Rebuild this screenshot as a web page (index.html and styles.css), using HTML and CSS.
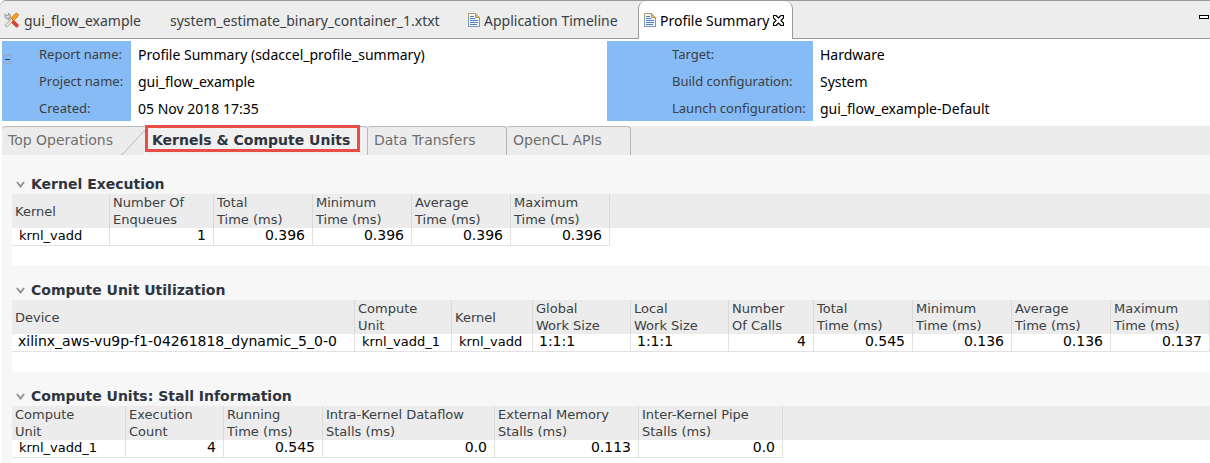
FILE: index.html
```html
<!DOCTYPE html>
<html lang="en">
<head>
<meta charset="utf-8">
<title>Profile Summary</title>
<link rel="stylesheet" href="styles.css">
</head>
<body>
<div class="app">
  <nav class="editor-tabs">
    <button class="editor-tab tab-project" type="button">
      <svg class="tools-icon" width="16" height="16" viewBox="0 0 16 16" aria-hidden="true">
        <path d="M4 5L12.500 13.500" stroke="#8a8a86" stroke-width="3.600" stroke-linecap="round"/>
        <path d="M4 5L12.500 13.500" stroke="#dcdcd8" stroke-width="1.800" stroke-linecap="round"/>
        <path d="M1 2v3.500l2 1.500 3-1L6.500 3 4.500 1v2.500H3z" fill="#d6d6d2" stroke="#888" stroke-width=".8"/>
        <path d="M2.500 13.500L8.500 7.500" stroke="#a8a8a4" stroke-width="3.400" stroke-linecap="round"/>
        <path d="M2.500 13.500L8.500 7.500" stroke="#e4e4e0" stroke-width="1.800" stroke-linecap="round"/>
        <path d="M7 6L12 1l2.500 1.500-1.500 3-3.500 3z" fill="#f5a31f" stroke="#ca6912" stroke-width=".8"/>
        <path d="M9.500 10l3.500 3.500" stroke="#df3f28" stroke-width="3.200" stroke-linecap="round"/>
      </svg>
      <span>gui_flow_example</span>
    </button>
    <button class="editor-tab tab-estimate" type="button">system_estimate_binary_container_1.xtxt</button>
    <button class="editor-tab tab-timeline" type="button">
      <svg width="12" height="14" viewBox="0 0 12 14" aria-hidden="true">
        <path d="M.5.5h7l4 4v9H.5z" fill="#edf4fc" stroke="#8095b6"/>
        <path d="M.5 5V.5h7l4 4" fill="none" stroke="#b3a06b"/>
        <path d="M7.500.5v4h4z" fill="#dfc071" stroke="#b99b51"/>
        <path d="M2 3.500h4M2 5.500h5M2 7.500h8M2 9.500h8M2 11.500h7" stroke="#557fbd"/>
      </svg>
      <span>Application Timeline</span>
    </button>
    <button class="editor-tab tab-current" type="button">
      <svg width="12" height="14" viewBox="0 0 12 14" aria-hidden="true">
        <path d="M.5.5h7l4 4v9H.5z" fill="#edf4fc" stroke="#8095b6"/>
        <path d="M.5 5V.5h7l4 4" fill="none" stroke="#b3a06b"/>
        <path d="M7.500.5v4h4z" fill="#dfc071" stroke="#b99b51"/>
        <path d="M2 3.500h4M2 5.500h5M2 7.500h8M2 9.500h8M2 11.500h7" stroke="#557fbd"/>
      </svg>
      <span>Profile Summary</span>
      <svg width="11" height="11" viewBox="0 0 11 11" aria-hidden="true">
        <path d="M.5.5h2.500l2.500 2.500L8 .5h2.500V3L8 5.500 10.500 8v2.500H8L5.500 8 3 10.500H.5V8L3 5.500.5 3z" fill="#fff" stroke="#000" stroke-width="1.200"/>
      </svg>
    </button>
    <button class="minimize" type="button" aria-label="Minimize"></button>
  </nav>

  <header class="report">
    <div class="labels labels-left">
      <button class="collapse" type="button" aria-label="Collapse"></button>
      <div class="label-list"><span>Report name:</span><span>Project name:</span><span>Created:</span></div>
    </div>
    <div class="values"><span>Profile Summary (sdaccel_profile_summary)</span><span>gui_flow_example</span><span>05 Nov 2018 17:35</span></div>
    <div class="labels labels-right">
      <div class="label-list"><span>Target:</span><span>Build configuration:</span><span>Launch configuration:</span></div>
    </div>
    <div class="values"><span>Hardware</span><span>System</span><span>gui_flow_example-Default</span></div>
  </header>

  <nav class="view-tabs">
    <button class="view-tab view-top" type="button">Top Operations
      <svg class="slope" width="24" height="29" viewBox="0 0 24 29" aria-hidden="true"><path d="M0 28.500Q2 28.500 4 26L22 6Q23 5 24 5" fill="none" stroke="#b8b8b8"/></svg>
    </button>
    <button class="view-tab view-kernels" type="button">Kernels &amp; Compute Units</button>
    <button class="view-tab view-transfers" type="button">Data Transfers</button>
    <button class="view-tab view-apis" type="button">OpenCL APIs</button>
  </nav>

  <main class="sections">
    <section>
      <h2><svg width="9" height="7" viewBox="0 0 9 7" aria-hidden="true"><path d="M1 1l3.500 4.500L8 1" fill="none" stroke="#929292" stroke-width="2"/></svg>Kernel Execution</h2>
      <div class="sheet">
        <table>
          <colgroup><col class="w98"><col class="w104"><col class="w99"><col class="w99"><col class="w99"><col class="w99"><col></colgroup>
          <thead><tr><th>Kernel</th><th>Number Of<br>Enqueues</th><th>Total<br>Time (ms)</th><th>Minimum<br>Time (ms)</th><th>Average<br>Time (ms)</th><th>Maximum<br>Time (ms)</th><td class="rest"></td></tr></thead>
          <tbody><tr><td>krnl_vadd</td><td class="num">1</td><td class="num">0.396</td><td class="num">0.396</td><td class="num">0.396</td><td class="num">0.396</td><td class="rest"></td></tr></tbody>
        </table>
      </div>
    </section>
    <section>
      <h2><svg width="9" height="7" viewBox="0 0 9 7" aria-hidden="true"><path d="M1 1l3.500 4.500L8 1" fill="none" stroke="#929292" stroke-width="2"/></svg>Compute Unit Utilization</h2>
      <div class="sheet">
        <table>
          <colgroup><col><col class="w97"><col class="w81"><col class="w98"><col class="w98"><col class="w85"><col class="w99"><col class="w99"><col class="w99"><col class="w99"></colgroup>
          <thead><tr><th>Device</th><th>Compute<br>Unit</th><th>Kernel</th><th>Global<br>Work Size</th><th>Local<br>Work Size</th><th>Number<br>Of Calls</th><th>Total<br>Time (ms)</th><th>Minimum<br>Time (ms)</th><th>Average<br>Time (ms)</th><th>Maximum<br>Time (ms)</th></tr></thead>
          <tbody><tr><td class="wide">xilinx_aws-vu9p-f1-04261818_dynamic_5_0-0</td><td>krnl_vadd_1</td><td>krnl_vadd</td><td class="wide">1:1:1</td><td class="wide">1:1:1</td><td class="num">4</td><td class="num">0.545</td><td class="num">0.136</td><td class="num">0.136</td><td class="num">0.137</td></tr></tbody>
        </table>
      </div>
    </section>
    <section>
      <h2><svg width="9" height="7" viewBox="0 0 9 7" aria-hidden="true"><path d="M1 1l3.500 4.500L8 1" fill="none" stroke="#929292" stroke-width="2"/></svg>Compute Units: Stall Information</h2>
      <div class="sheet">
        <table>
          <colgroup><col class="w114"><col class="w98"><col class="w99"><col class="w172"><col class="w144"><col class="w144"><col></colgroup>
          <thead><tr><th>Compute<br>Unit</th><th>Execution<br>Count</th><th>Running<br>Time (ms)</th><th>Intra-Kernel Dataflow<br>Stalls (ms)</th><th>External Memory<br>Stalls (ms)</th><th>Inter-Kernel Pipe<br>Stalls (ms)</th><td class="rest"></td></tr></thead>
          <tbody><tr><td>krnl_vadd_1</td><td class="num">4</td><td class="num">0.545</td><td class="num">0.0</td><td class="num">0.113</td><td class="num">0.0</td><td class="rest"></td></tr></tbody>
        </table>
      </div>
    </section>
  </main>
</div>
</body>
</html>
```
FILE: styles.css
```css
* { box-sizing: border-box; }

body {
  margin: 0;
  background: #fff;
  overflow: hidden;
}

button {
  margin: 0;
  padding: 0;
  border: 0;
  background: none;
  color: inherit;
  font: inherit;
  white-space: nowrap;
}

svg { flex: none; display: block; }

.app {
  font: 13px "DejaVu Sans", sans-serif;
  color: #3a4043;
}

/* Editor tabs */
.editor-tabs {
  display: flex;
  height: 39px;
  background: #ededed;
  border-top: 1px solid #999;
  border-radius: 6px 0 0 0;
  box-shadow: inset 0 -1px #999;
  font: 14px "Noto Sans", sans-serif;
}

.editor-tab {
  display: flex;
  align-items: center;
  gap: 4px;
}

.tab-project { width: 170px; padding-left: 4px; }
.tab-estimate { width: 298px; }
.tab-timeline { width: 170px; }

.tab-current {
  width: 155px;
  padding-left: 5px;
  background: #fff;
  color: #000;
  border: 1px solid #999;
  border-width: 0 1px;
  border-radius: 8px 8px 0 0;
}

.minimize {
  width: 10px;
  height: 4px;
  margin: 14px 1px 0 auto;
  background: #fff;
  border: 1px solid #000;
}

/* Report details */
.report {
  display: grid;
  grid-template-columns: 129px 476px 206px 1fr;
  padding: 2px 0 5px 2px;
  font: 14px/27px "Noto Sans", sans-serif;
  white-space: nowrap;
}

.labels {
  display: flex;
  height: 80px;
  background: #86bbf5;
  font-size: 13px;
}

.label-list, .values { display: flex; flex-direction: column; }
.values { height: 80px; padding-left: 7px; color: #000; }
.labels-right { padding-left: 65px; }

.collapse {
  display: flex;
  align-items: center;
  justify-content: center;
  width: 9px;
  height: 9px;
  margin: 14px 27px 0 1px;
  border: 1px solid #a2a9b3;
}

.collapse::before {
  content: "";
  width: 5px;
  height: 1px;
  background: #24405f;
}

/* View tabs */
.view-tabs {
  display: flex;
  height: 29px;
  margin-left: 2px;
  background: #ececec;
  font-size: 14px;
  color: #6f6f6f;
}

.view-tab {
  position: relative;
  padding: 0 0 3px 6px;
  text-align: left;
  border: 1px solid #b8b8b8;
  border-width: 1px 1px 0 0;
  border-radius: 4px 4px 0 0;
}

.view-top { width: 143px; border-right: 0; border-radius: 4px 0 0 0; }
.view-transfers { width: 139px; }
.view-apis { width: 124px; }

.slope {
  position: absolute;
  right: 0;
  bottom: 0;
}

.view-kernels {
  width: 223px;
  background: #f0f0f0;
  border-left: 1px solid #fff;
  color: #2e3440;
  font-weight: bold;
}

.view-kernels::after {
  content: "";
  position: absolute;
  inset: -2px 7px 3px -1px;
  border: 3px solid #ea4c46;
}

/* Table sections */
.sections {
  margin-left: 2px;
  padding: 19px 0 0 10px;
  background: #f7f7f7;
}

h2 {
  display: flex;
  align-items: center;
  gap: 6px;
  height: 20px;
  margin: 0;
  padding-left: 4px;
  color: #2e3440;
  font-size: 14px;
  white-space: nowrap;
}

.sheet { padding-bottom: 20px; background: #fff; }
section + section { padding-top: 14px; }

table {
  width: 100%;
  table-layout: fixed;
  border-collapse: separate;
  border-spacing: 0;
}

th {
  height: 34px;
  padding: 0 0 0 3px;
  background: #ececec;
  border-right: 1px solid #dadada;
  font-weight: normal;
  line-height: 17px;
  text-align: left;
  vertical-align: middle;
  white-space: nowrap;
}

td {
  height: 18px;
  padding: 0 0 2px 7px;
  border: 1px solid #e2e2e2;
  border-width: 0 1px 1px 0;
  color: #000;
  line-height: 15px;
  white-space: nowrap;
}

.num { padding: 0 7px 2px 0; font-size: 14px; text-align: right; }
.wide { font-size: 14px; padding-left: 6px; }
.rest { border: 0; }
thead .rest { background: #ececec; }

.w81 { width: 81px; }
.w85 { width: 85px; }
.w97 { width: 97px; }
.w98 { width: 98px; }
.w99 { width: 99px; }
.w104 { width: 104px; }
.w114 { width: 114px; }
.w144 { width: 144px; }
.w172 { width: 172px; }
```
